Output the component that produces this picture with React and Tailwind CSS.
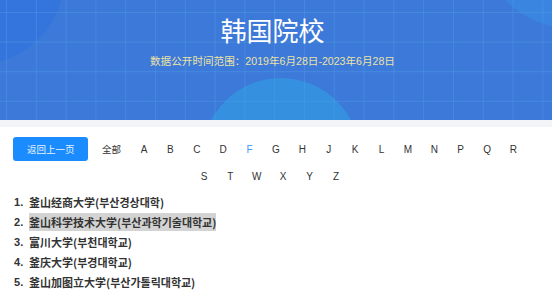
import React from "react"

const letters = ["A", "B", "C", "D", "F", "G", "H", "J", "K", "L", "M", "N", "P", "Q", "R", "S", "T", "W", "X", "Y", "Z"]

const schools = [
	{ cn: "釜山经商大学", kr: "(부산경상대학)" },
	{ cn: "釜山科学技术大学", kr: "(부산과학기술대학교)", picked: true },
	{ cn: "富川大学", kr: "(부천대학교)" },
	{ cn: "釜庆大学", kr: "(부경대학교)" },
	{ cn: "釜山加图立大学", kr: "(부산가톨릭대학교)" },
]

export default function App() {
	return (
		<div className="w-[552px] h-[297px] overflow-hidden bg-white font-['Liberation_Sans','Noto_Sans_CJK_SC',sans-serif]">
			{/* banner */}
			<div className="relative h-[120px] overflow-hidden bg-[#3c79d8]">
				<div className="absolute left-[-115px] top-[-115px] w-[180px] h-[180px] rounded-full bg-[#3475dd]" />
				<div className="absolute left-[482px] top-[-148px] w-[176px] h-[176px] rounded-full bg-[#3a85e0]" />
				<div className="absolute left-[202px] top-[78px] w-[158px] h-[158px] rounded-full bg-[#3590e0]" />
				<div className="absolute inset-0 bg-[linear-gradient(to_right,rgba(80,160,230,0.4)_1px,transparent_1px),linear-gradient(to_bottom,rgba(80,160,230,0.4)_1px,transparent_1px)] bg-[size:29.8px_29.6px] bg-[position:6px_12px]" />
				<div className="relative flex flex-col items-center pr-[7px]">
					<div className="mt-[14px] text-[26px] leading-[32px] text-white font-['Noto_Sans_CJK_SC',sans-serif] font-normal">
						韩国院校
					</div>
					<div className="mt-[8px] text-[10.6px] leading-[14px] text-[#ece2a6] font-['Liberation_Sans','Noto_Sans_CJK_SC',sans-serif]">
						数据公开时间范围：2019年6月28日-2023年6月28日
					</div>
				</div>
			</div>
			<div className="h-[7px] bg-[#f3f4f8]" />

			{/* letter filter */}
			<div className="w-[545px] pl-[5px] pr-[10px] pt-[10px]">
				<div className="flex flex-wrap justify-center gap-y-[3px]">
					<button className="w-[75px] h-[24px] mr-[4px] rounded-[3px] bg-[#1a8cff] text-[9.5px] text-[#e8f1ff] font-['Noto_Sans_CJK_SC',sans-serif]">
						返回上一页
					</button>
					<div className="h-[24px] px-[9.7px] flex items-center text-[9.5px] text-[#333] font-['Noto_Sans_CJK_SC',sans-serif]">
						全部
					</div>
					{letters.map((l) => (
						<div
							key={l}
							className={
								l === "F"
									? "w-[26.4px] h-[24px] flex items-center justify-center text-[10px] text-[#3a9af5]"
									: "w-[26.4px] h-[24px] flex items-center justify-center text-[10px] text-[#333]"
							}
						>
							{l}
						</div>
					))}
				</div>
			</div>

			{/* school list */}
			<div className="mt-[4px] pl-[14px] font-['Noto_Sans_CJK_SC',sans-serif] font-bold text-[11px] leading-[20px] text-[#333]">
				{schools.map((s, i) => (
					<div key={i} className="flex items-center h-[20px]">
						<span className="w-[15px] font-['Liberation_Sans',sans-serif]">{i + 1}.</span>
						<span className={s.picked ? "inline-block leading-[18px] bg-[#d3d3d3]" : "inline-block leading-[18px]"}>
							{s.cn}
							{s.kr}
						</span>
					</div>
				))}
			</div>
		</div>
	)
}
